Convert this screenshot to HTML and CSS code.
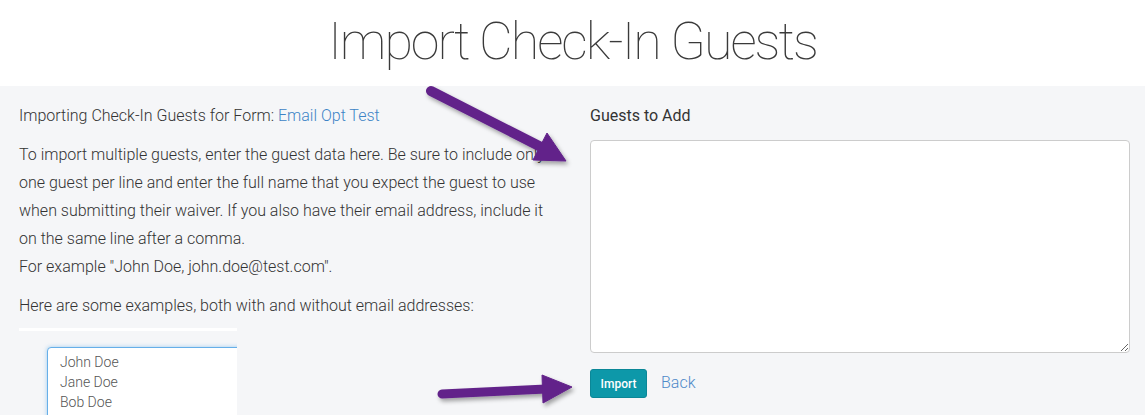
FILE: index.html
```html
<!DOCTYPE html>
<html lang="en">
<head>
<meta charset="utf-8">
<title>Import Check-In Guests</title>
<link rel="stylesheet" href="styles.css">
</head>
<body>
<div class="page">
  <header class="header">
    <h1 class="title">Import Check-In Guests</h1>
  </header>
  <main class="main">
    <section class="col-left">
      <p class="intro">Importing Check-In Guests for Form: <a class="link" href="#">Email Opt Test</a></p>
      <p class="desc">To import multiple guests, enter the guest data here. Be sure to include only one guest per line and enter the full name that you expect the guest to use when submitting their waiver. If you also have their email address, include it on the same line after a comma.<br>For example "John Doe, john.doe@test.com".</p>
      <p class="desc2">Here are some examples, both with and without email addresses:</p>
      <div class="example-wrap">
        <div class="example-box">
          <div class="ex-line">John Doe</div>
          <div class="ex-line">Jane Doe</div>
          <div class="ex-line">Bob Doe</div>
        </div>
      </div>
    </section>
    <section class="col-right">
      <label class="label" for="guests">Guests to Add</label>
      <textarea id="guests" class="guests"></textarea>
      <div class="actions">
        <button class="btn-import" type="button">Import</button>
        <a class="back" href="#">Back</a>
      </div>
    </section>
  </main>
  <svg class="arrows" width="1145" height="415" viewBox="0 0 1145 415" xmlns="http://www.w3.org/2000/svg">
    <defs>
      <filter id="sh" x="-20%" y="-20%" width="140%" height="160%">
        <feDropShadow dx="2" dy="3" stdDeviation="2" flood-color="#000" flood-opacity="0.35"/>
      </filter>
    </defs>
    <g filter="url(#sh)" fill="#62238a" stroke="#62238a">
      <line x1="431" y1="91" x2="543" y2="148" stroke-width="10" stroke-linecap="round"/>
      <polygon points="547,133 566,161 533,160" stroke-width="1" stroke-linejoin="round"/>
      <line x1="442" y1="394" x2="546" y2="389" stroke-width="9" stroke-linecap="round"/>
      <polygon points="542,375 572,387 543,403" stroke-width="1" stroke-linejoin="round"/>
    </g>
  </svg>
</div>
</body>
</html>
```
FILE: styles.css
```css
html, body {
  margin: 0;
  padding: 0;
  height: 415px;
  overflow: hidden;
  background: #f5f6f8;
}
.page {
  position: relative;
  width: 1145px;
  height: 415px;
  font-family: Roboto, "Liberation Sans", sans-serif;
  color: #333;
}
.header {
  height: 86px;
  background: #fff;
  display: flex;
  justify-content: center;
}
.title {
  margin: 0;
  padding-top: 10px;
  font-family: Roboto, "Liberation Sans", sans-serif;
  font-weight: 100;
  font-size: 52px;
  line-height: 64px;
  letter-spacing: -2px;
  color: #3a3a3a;
}
.main {
  display: flex;
  gap: 30px;
  padding: 16px 15px 0 19px;
  background: #f5f6f8;
}
.col-left {
  width: 541px;
  flex: none;
  font-weight: 300;
  font-size: 16px;
  line-height: 28px;
}
.col-left p {
  margin: 0;
}
.intro {
  margin-bottom: 11px !important;
}
.desc {
  margin-bottom: 11px !important;
}
.link {
  color: #3d84c6;
  text-decoration: none;
}
.example-wrap {
  margin-top: 8px;
  width: 218px;
  height: 100px;
  overflow: hidden;
  border-top: 3px solid #fff;
  padding: 16px 0 0 28px;
  box-sizing: border-box;
}
.example-box {
  width: 300px;
  height: 120px;
  background: #fff;
  border: 1px solid #66afe9;
  border-radius: 4px;
  box-shadow: 0 0 4px rgba(102, 175, 233, 0.6);
  padding: 4px 12px;
  font-size: 14px;
  line-height: 20px;
  color: #555;
  font-weight: 300;
}
.col-right {
  width: 540px;
  flex: none;
  display: flex;
  flex-direction: column;
}
.label {
  font-size: 16px;
  line-height: 28px;
  font-weight: 400;
  color: #333;
}
.guests {
  margin-top: 10px;
  height: 213px;
  box-sizing: border-box;
  border: 1px solid #ccc;
  border-radius: 4px;
  background: #fff;
  resize: vertical;
  font-family: inherit;
}
.actions {
  margin-top: 16px;
  display: flex;
  align-items: center;
  gap: 14px;
}
.btn-import {
  width: 57px;
  height: 29px;
  background: #0d98a9;
  border: 1px solid #0b8797;
  border-radius: 3px;
  color: #fff;
  font-family: Roboto, "Liberation Sans", sans-serif;
  font-size: 12px;
  font-weight: 500;
  padding: 0;
}
.back {
  color: #4f8ac9;
  font-size: 16px;
  font-weight: 300;
  text-decoration: none;
  margin-top: -3px;
}
.arrows {
  position: absolute;
  top: 0;
  left: 0;
  pointer-events: none;
}
```
